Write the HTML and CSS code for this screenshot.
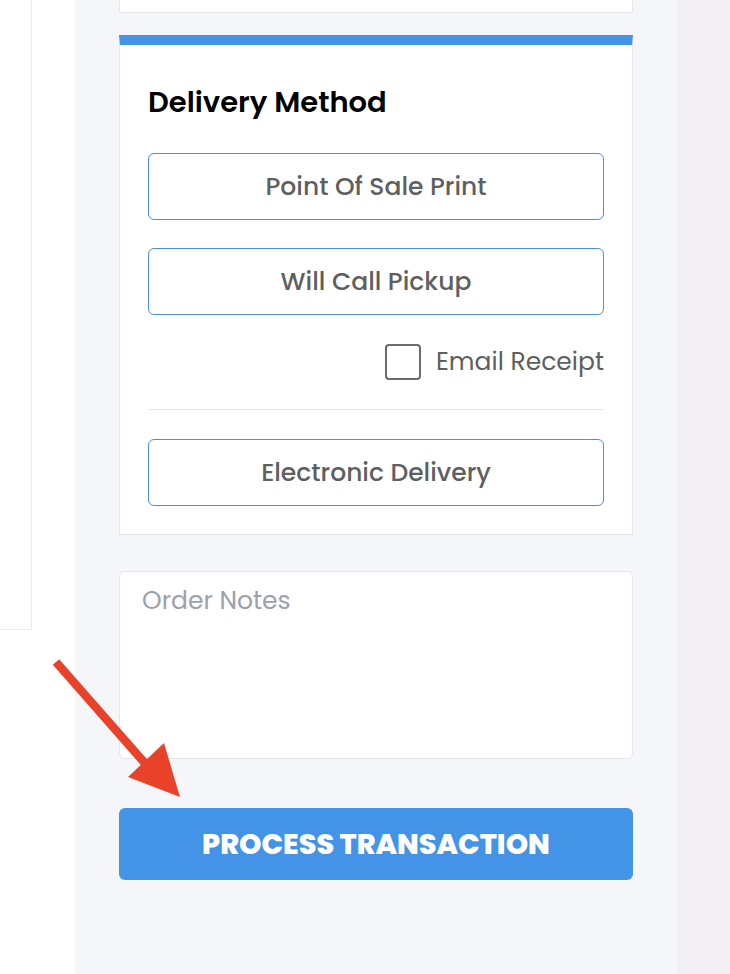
FILE: index.html
```html
<!DOCTYPE html>
<html>
<head>
    <title>Checkout - Delivery</title>
    <link rel="stylesheet" href="styles.css">
</head>
<body>
    <div class="page">
        <!-- left side, edge of the cart panel -->
        <aside class="left-area">
            <div class="cart-panel"></div>
        </aside>

        <main class="checkout-column">
            <div class="card card-cut"></div>

            <section class="card delivery-card">
                <h2 class="card-title">Delivery Method</h2>
                <button class="delivery-option">Point Of Sale Print</button>
                <button class="delivery-option">Will Call Pickup</button>
                <label class="email-receipt">
                    <input type="checkbox" class="receipt-check">
                    <span>Email Receipt</span>
                </label>
                <hr class="divider">
                <button class="delivery-option">Electronic Delivery</button>
            </section>

            <textarea class="order-notes" placeholder="Order Notes"></textarea>

            <button class="process-btn">Process Transaction</button>
        </main>

        <div class="right-strip"></div>
    </div>

    <!-- annotation arrow pointing at the process button -->
    <svg class="annotation-arrow" width="200" height="820" viewBox="0 0 200 820">
        <line x1="56" y1="662" x2="150" y2="769" stroke="#e8432a" stroke-width="8.5"/>
        <polygon points="128,777 164,743 180,797" fill="#e8432a"/>
    </svg>
</body>
</html>
```

FILE: styles.css
```css
body {
    margin: 0;
    padding: 0;
    font-family: "Poppins", "Open Sans", sans-serif;
    background-color: #ffffff;
}

.page {
    display: flex;
    min-height: 974px;
}

.left-area {
    width: 75px;
    flex-shrink: 0;
    background-color: #ffffff;
}

.cart-panel {
    width: 31px;
    height: 629px;
    border-right: 1px solid #ececef;
    border-bottom: 1px solid #ececef;
}

.checkout-column {
    width: 514px;
    padding: 0 44px;
    background-color: #f5f6fa;
    display: flex;
    flex-direction: column;
}

.right-strip {
    flex-grow: 1;
    background-color: #f2f0f5;
}

/** Cards **/

.card {
    background-color: #ffffff;
    border: 1px solid #e4e6ea;
    box-sizing: border-box;
}

.card-cut {
    height: 13px;
    border-top: none;
}

.delivery-card {
    margin-top: 22px;
    border-top: 10px solid #4393e6;
    padding: 0 28px 28px 28px;
    display: flex;
    flex-direction: column;
}

.card-title {
    margin: 39px 0 33px 0;
    font-size: 29px;
    font-weight: 600;
    color: #000000;
    line-height: 36px;
}

.delivery-option {
    height: 67px;
    margin-bottom: 28px;
    border: 1px solid #4a90e2;
    border-radius: 6px;
    background-color: #ffffff;
    font-family: inherit;
    font-size: 25px;
    font-weight: 500;
    color: #5f5f5f;
    cursor: pointer;
}

.delivery-option:last-child {
    margin-bottom: 0;
}

.email-receipt {
    display: flex;
    justify-content: flex-end;
    align-items: center;
    gap: 15px;
    margin-top: 0;
    font-size: 25px;
    color: #5f5f5f;
}

.receipt-check {
    appearance: none;
    width: 36px;
    height: 36px;
    margin: 0;
    border: 2px solid #6b6b6b;
    border-radius: 4px;
    background-color: #ffffff;
}

.divider {
    margin: 28px 0 29px 0;
    border: none;
    border-top: 1px solid #e6e6e8;
}

/** Notes and submit **/

.order-notes {
    margin-top: 36px;
    height: 188px;
    padding: 10px 22px;
    box-sizing: border-box;
    border: 1px solid #e4e6ea;
    border-radius: 6px;
    font-family: inherit;
    font-size: 25px;
    resize: none;
}

.order-notes::placeholder {
    color: #9ba1ad;
}

.process-btn {
    margin-top: 49px;
    height: 72px;
    border: none;
    border-radius: 6px;
    background-color: #4393e6;
    color: #ffffff;
    font-family: inherit;
    font-size: 28.5px;
    font-weight: 800;
    text-transform: uppercase;
    cursor: pointer;
}

.annotation-arrow {
    position: absolute;
    left: 0;
    top: 0;
}
```
